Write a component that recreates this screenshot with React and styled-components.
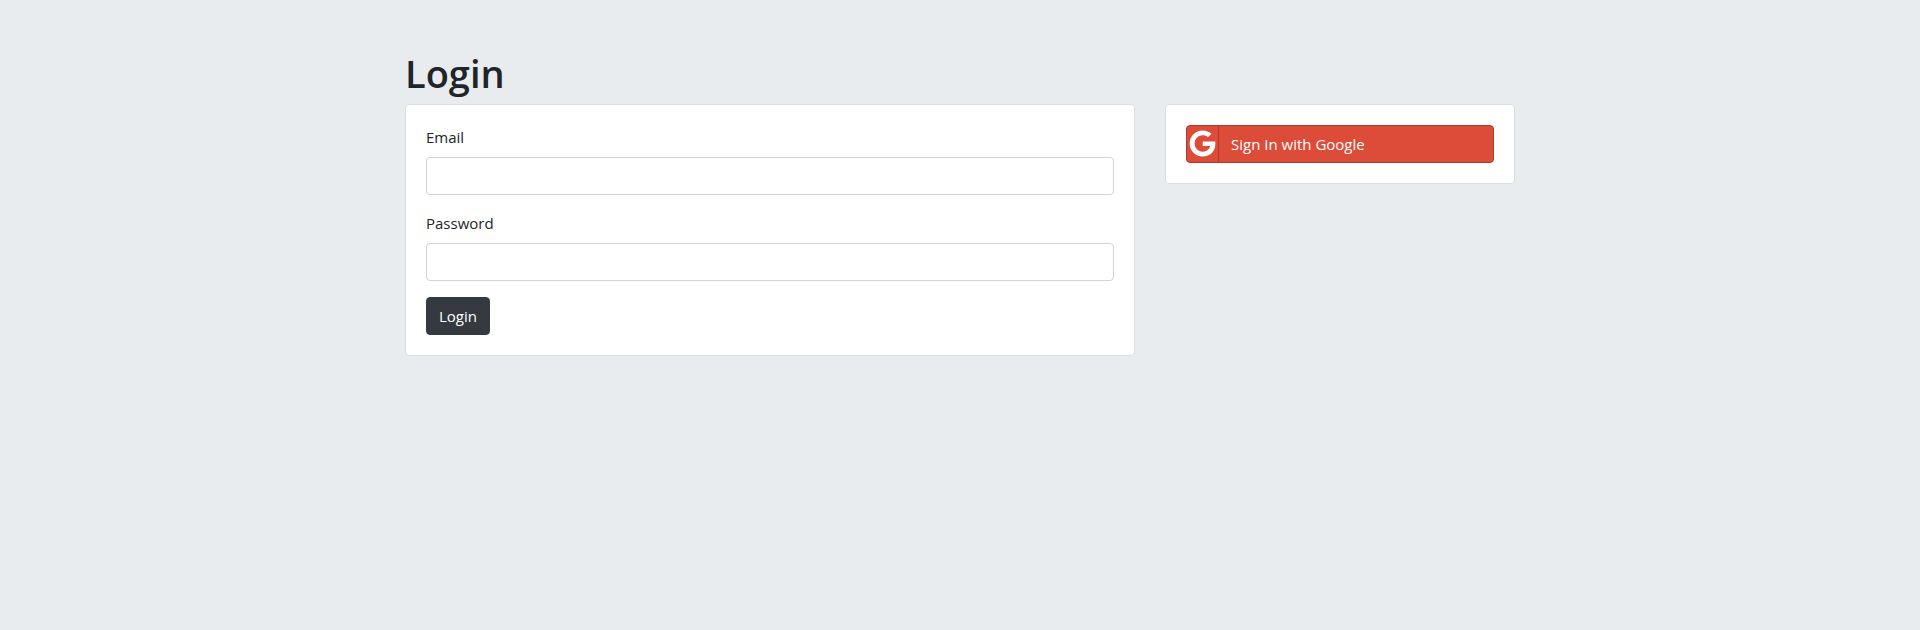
import React from "react";
import styled, { createGlobalStyle } from "styled-components";
import { FaGoogle } from "react-icons/fa";

const GlobalStyle = createGlobalStyle`
  *, *::before, *::after { box-sizing: border-box; }
  body {
    margin: 0;
    background: #e8ecef;
    color: #212529;
    font-family: "Segoe UI", "Open Sans", "Noto Sans", sans-serif;
    font-size: 15px;
    line-height: 24px;
  }
`;

const Container = styled.main`
  max-width: 1140px;
  margin: 0 auto;
  padding: 48px 15px 0;
`;

const Title = styled.h1`
  margin: 0 0 6px;
  font-size: 38px;
  font-weight: 600;
  line-height: 50px;
`;

const Columns = styled.div`
  display: grid;
  grid-template-columns: minmax(0, 73fr) minmax(0, 35fr);
  gap: 30px;
  align-items: start;

  @media (max-width: 767px) {
    grid-template-columns: minmax(0, 1fr);
  }
`;

const Card = styled.section`
  padding: 20px;
  background: #fff;
  border: 1px solid #dcdfe1;
  border-radius: 4px;
`;

const Field = styled.div`
  margin-bottom: 16px;
`;

const Label = styled.label`
  display: block;
  margin-bottom: 8px;
`;

const Input = styled.input`
  display: block;
  width: 100%;
  height: 38px;
  padding: 6px 12px;
  border: 1px solid #ced4da;
  border-radius: 4px;
  background: #fff;
  color: #495057;
  font: inherit;
`;

const SubmitButton = styled.button`
  display: block;
  height: 38px;
  padding: 6px 12px;
  border: 1px solid #343a40;
  border-radius: 4px;
  background: #343a40;
  color: #fff;
  font: inherit;
  cursor: pointer;
`;

const GoogleLink = styled.a`
  display: flex;
  align-items: stretch;
  height: 38px;
  border: 1px solid #b13c2e;
  border-radius: 4px;
  background: #dd4b39;
  color: #fff;
  text-decoration: none;
`;

const GoogleMark = styled.span`
  display: flex;
  align-items: center;
  justify-content: center;
  width: 32px;
  padding-bottom: 2px;
  border-right: 1px solid #b13c2e;
`;

const GoogleText = styled.span`
  padding: 6px 12px;
`;

function TextField({ id, label, type }) {
  return (
    <Field>
      <Label htmlFor={id}>{label}</Label>
      <Input id={id} name={id} type={type} />
    </Field>
  );
}

export default function App() {
  return (
    <>
      <GlobalStyle />
      <Container>
        <Title>Login</Title>
        <Columns>
          <Card>
            <form>
              <TextField id="email" label="Email" type="email" />
              <TextField id="password" label="Password" type="password" />
              <SubmitButton type="submit">Login</SubmitButton>
            </form>
          </Card>
          <Card>
            <GoogleLink href="#google">
              <GoogleMark>
                <FaGoogle size={27} aria-hidden="true" />
              </GoogleMark>
              <GoogleText>Sign In with Google</GoogleText>
            </GoogleLink>
          </Card>
        </Columns>
      </Container>
    </>
  );
}
